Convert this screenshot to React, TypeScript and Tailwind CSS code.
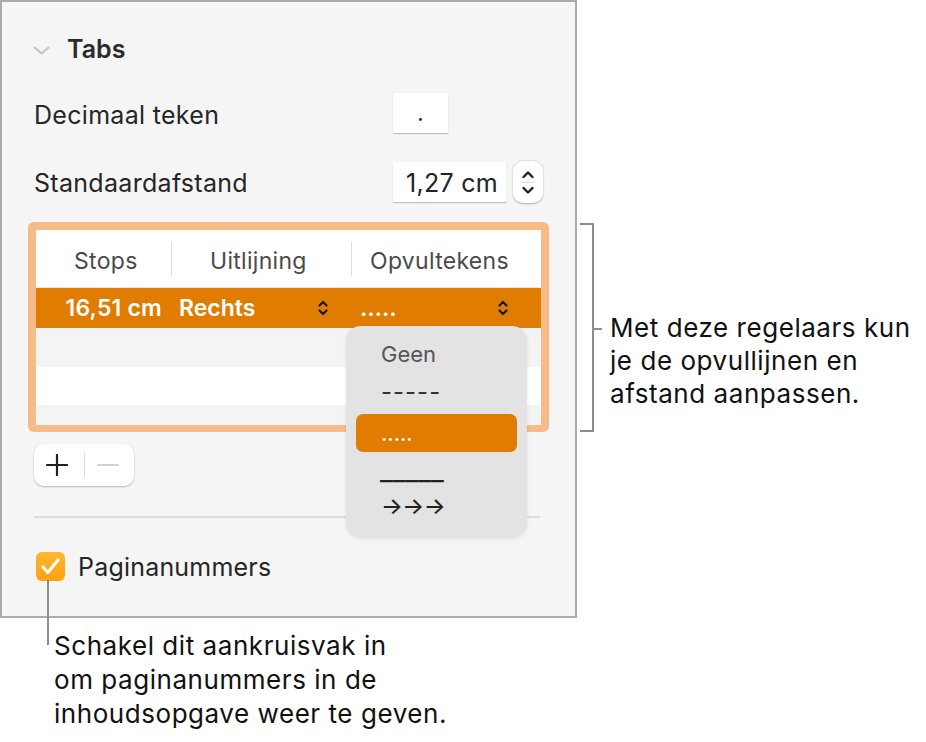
import React from 'react'

function UpDown({ className = '' }: { className?: string }) {
  return (
    <svg width="10" height="18" viewBox="0 0 10 18" className={className} fill="none" stroke="currentColor" strokeWidth="2.2" strokeLinecap="round" strokeLinejoin="round">
      <path d="M1.5 6.5 L5 3 L8.5 6.5" />
      <path d="M1.5 11.5 L5 15 L8.5 11.5" />
    </svg>
  )
}

export default function App() {
  return (
    <div className="relative w-[926px] h-[742px] bg-white text-[#222] font-['Inter',sans-serif] overflow-hidden">
      <div className="flex items-start">
        {/* Inspector panel */}
        <div className="w-[577px] h-[618px] shrink-0 border-2 border-[#ababab] bg-[#f5f5f5] pl-[32px]">
          {/* Section header */}
          <div className="mt-[28px] h-[40px] flex items-center">
            <svg width="17" height="9" viewBox="0 0 17 9" fill="none" stroke="#c2c2c2" strokeWidth="2" strokeLinecap="round" strokeLinejoin="round" className="-ml-px">
              <path d="M1.5 1.5 L8.5 7.5 L15.5 1.5" />
            </svg>
            <span className="ml-[17px] text-[25px] font-semibold text-[#2b2b2b]">Tabs</span>
          </div>

          {/* Decimaal teken */}
          <div className="mt-[23px] h-[40px] flex items-center">
            <span className="w-[359px] pt-[6px] text-[25px] tracking-[0.3px] text-[#262626]">Decimaal teken</span>
            <div className="w-[55px] h-[40px] bg-white shadow-[0_1px_1px_rgba(0,0,0,0.22)] flex items-center justify-center text-[22px] text-[#222]">.</div>
          </div>

          {/* Standaardafstand */}
          <div className="mt-[28px] h-[42px] flex items-center">
            <span className="w-[359px] pt-[4px] text-[25px] tracking-[0.3px] text-[#262626]">Standaardafstand</span>
            <div className="w-[113px] h-[40px] bg-white shadow-[0_1px_1px_rgba(0,0,0,0.22)] flex items-center justify-end pr-[8px] pt-[3px] text-[25px] tracking-[0.3px] text-[#222]">1,27 cm</div>
            <div className="ml-[7px] w-[30px] h-[42px] rounded-[10px] bg-white shadow-[0_0.5px_2px_rgba(0,0,0,0.3)] flex flex-col items-center justify-center text-[#222]">
              <svg width="14" height="36" viewBox="0 0 14 36" fill="none" stroke="currentColor" strokeWidth="2.4" strokeLinecap="round" strokeLinejoin="round">
                <path d="M2.5 13 L7 8.5 L11.5 13" />
                <path d="M2.5 24 L7 28.5 L11.5 24" />
                <path d="M0 18.5 H14" stroke="#e2e2e2" strokeWidth="1" />
              </svg>
            </div>
          </div>

          {/* Tab stops table with focus ring */}
          <div className="mt-[19px] -ml-[6px] w-[521px] p-[8px] pb-[7px] rounded-[6px] bg-[#f6bb86]">
            <div className="h-[195px] bg-white overflow-hidden">
              <div className="h-[58px] flex items-center border-b border-[#e6e6e6] text-[23px] tracking-[0.3px] text-[#4a4a4a]">
                <div className="w-[135px] pl-[38px] mt-[6px]">Stops</div>
                <div className="w-px h-[34px] bg-[#dedede]" />
                <div className="w-[179px] pl-[38px] mt-[6px]">Uitlijning</div>
                <div className="w-px h-[34px] bg-[#dedede]" />
                <div className="flex-1 pl-[18px] mt-[6px]">Opvultekens</div>
              </div>
              <div className="h-[40px] flex items-center bg-[#e07c00] text-white text-[23px] font-semibold">
                <div className="w-[135px] text-right pr-[9px] tracking-[0.2px]">16,51 cm</div>
                <div className="w-[180px] pl-[8px] pr-[23px] flex items-center justify-between">
                  <span>Rechts</span>
                  <UpDown className="text-[#1a1a1a]" />
                </div>
                <div className="flex-1 pl-[9px] pr-[33px] flex items-center justify-between">
                  <span>.....</span>
                  <UpDown className="text-[#1a1a1a]" />
                </div>
              </div>
              <div className="h-[39px] bg-[#f3f4f4]" />
              <div className="h-[38px] bg-white" />
              <div className="h-[20px] bg-[#f3f4f4]" />
            </div>
          </div>

          {/* Add / remove */}
          <div className="mt-[12px] w-[100px] h-[42px] rounded-[10px] bg-white shadow-[0_1px_2px_rgba(0,0,0,0.25)] flex items-center">
            <svg width="22" height="22" viewBox="0 0 22 22" className="ml-[12px]" stroke="#1f1f1f" strokeWidth="2.2" strokeLinecap="round">
              <path d="M11 1 V21 M1 11 H21" />
            </svg>
            <div className="ml-[16px] w-px h-[24px] bg-[#dcdcdc]" />
            <svg width="22" height="4" viewBox="0 0 22 4" className="ml-[12px]" stroke="#c4c4c4" strokeWidth="1.6" strokeLinecap="round">
              <path d="M1 2 H21" />
            </svg>
          </div>

          <div className="mt-[30px] w-[506px] h-[2px] bg-[#dcdcdc]" />

          {/* Checkbox */}
          <div className="mt-[29px] flex items-center">
            <div className="ml-[2px] w-[29px] h-[29px] rounded-[6px] bg-gradient-to-b from-[#ffb730] to-[#ffa10a] flex items-center justify-center">
              <svg width="21" height="19" viewBox="0 0 21 19" fill="none" stroke="white" strokeWidth="3.2" strokeLinecap="round" strokeLinejoin="round">
                <path d="M3 10 L7.8 15.5 L18 3" />
              </svg>
            </div>
            <span className="ml-[13px] pt-[2px] text-[25px] tracking-[0.2px] text-[#262626]">Paginanummers</span>
          </div>
        </div>

        {/* Right callout */}
        <div className="ml-[3px] mt-[223px] flex items-start">
          <div className="w-[14px] h-[209px] border-y-2 border-r-2 border-[#8c8c8c]" />
          <div className="mt-[88px] flex items-start">
            <div className="mt-[17px] w-[8px] h-[2px] bg-[#8c8c8c]" />
            <div className="ml-[8px] text-[26px] leading-[33px] tracking-[0.55px] text-[#111] whitespace-nowrap">
              Met deze regelaars kun<br />je de opvullijnen en<br />afstand aanpassen.
            </div>
          </div>
        </div>
      </div>

      {/* Bottom callout */}
      <div className="mt-[11px] pl-[54px] text-[26px] leading-[34px] tracking-[0.55px] text-[#111] whitespace-nowrap">
        Schakel dit aankruisvak in<br />om paginanummers in de<br />inhoudsopgave weer te geven.
      </div>

      {/* Leader line from checkbox */}
      <div className="absolute left-[47px] top-[580px] w-[2px] h-[65px] bg-[#8c8c8c]" />

      {/* Open leader pop-up menu */}
      <div className="absolute left-[346px] top-[326px] w-[181px] h-[212px] rounded-[15px] bg-[#e3e3e3] shadow-[0_1px_4px_rgba(0,0,0,0.08)] pt-[9px] text-[22px]">
        <div className="h-[38px] flex items-center pl-[35px] text-[#555]">Geen</div>
        <div className="h-[38px] flex items-center pl-[35px] text-[24px] text-[#333] tracking-[1px]">-----</div>
        <div className="mt-[3px] mx-[10px] h-[38px] rounded-[7px] bg-[#e07c00] flex items-center pl-[25px] text-white">.....</div>
        <div className="h-[36px] flex items-center pl-[34px] text-[28px] text-[#222]">_____</div>
        <div className="h-[36px] flex items-center pl-[35px] text-[23px] font-medium tracking-[-0.6px] text-[#222]">→→→</div>
      </div>
    </div>
  )
}
